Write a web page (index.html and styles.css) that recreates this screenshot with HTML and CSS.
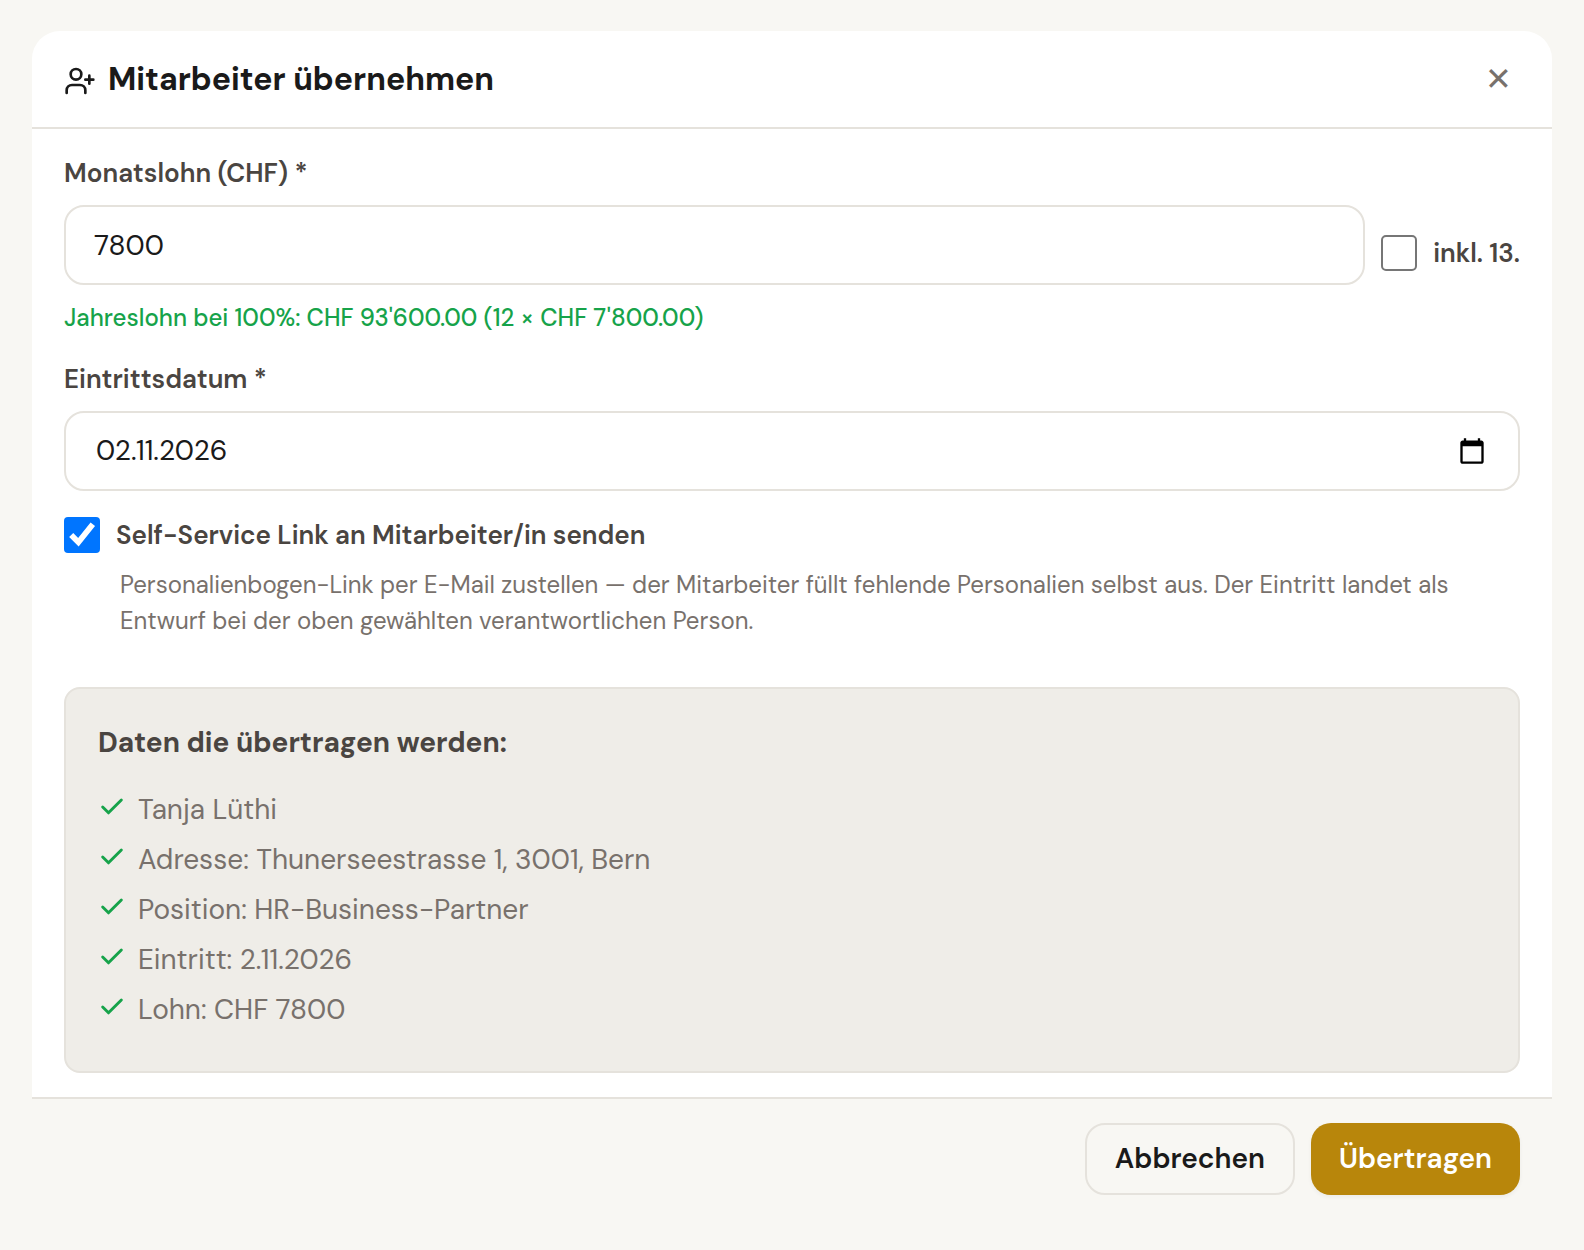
FILE: index.html
```
<!DOCTYPE html>
<html lang="de">
<head>
<meta charset="UTF-8">
<meta name="viewport" content="width=device-width, initial-scale=1.0">
<title>Mitarbeiter übernehmen</title>
<link rel="stylesheet" href="styles.css">
</head>
<body>
<form class="modal">
  <!-- Header -->
  <header class="modal-header">
    <h2 class="modal-title">
      <svg class="title-icon" viewBox="0 0 24 24" aria-hidden="true">
        <path d="M16 21v-2a4 4 0 0 0-4-4H6a4 4 0 0 0-4 4v2"/>
        <circle cx="9" cy="7" r="4"/>
        <path d="M19 8v6M22 11h-6"/>
      </svg>
      Mitarbeiter übernehmen
    </h2>
    <button type="button" class="close-btn" aria-label="Schliessen">✕</button>
  </header>

  <!-- Form fields -->
  <div class="modal-body">
    <div class="field">
      <label class="field-label" for="lohn">Monatslohn (CHF) *</label>
      <div class="input-row">
        <input type="text" class="input" id="lohn" name="lohn" inputmode="decimal" value="7800">
        <label class="check-label"><input type="checkbox" class="checkbox" name="inkl13"> inkl. 13.</label>
      </div>
      <p class="salary-hint">Jahreslohn bei 100%: CHF 93'600.00 (12 × CHF 7'800.00)</p>
    </div>

    <div class="field">
      <label class="field-label" for="eintritt">Eintrittsdatum *</label>
      <div class="input date-input">
        <input type="text" class="date-text" id="eintritt" name="eintritt" value="02.11.2026">
        <button type="button" class="calendar-btn" aria-label="Kalender öffnen">
          <svg viewBox="0 0 24 24" aria-hidden="true"><path d="M20 3h-1V1h-2v2H7V1H5v2H4c-1.100 0-2 .9-2 2v16c0 1.100.9 2 2 2h16c1.100 0 2-.9 2-2V5c0-1.100-.9-2-2-2zm0 18H4V8h16v13z"/></svg>
        </button>
      </div>
    </div>

    <div class="self-service">
      <label class="check-label"><input type="checkbox" class="checkbox" name="selfservice" checked> Self-Service Link an Mitarbeiter/in senden</label>
      <p class="help-text">Personalienbogen-Link per E-Mail zustellen — der Mitarbeiter füllt fehlende Personalien selbst aus. Der Eintritt landet als Entwurf bei der oben gewählten verantwortlichen Person.</p>
    </div>

    <!-- Summary -->
    <section class="summary">
      <h3 class="summary-title">Daten die übertragen werden:</h3>
      <ul class="summary-list">
        <li><svg class="check" viewBox="0 0 24 24" aria-hidden="true"><path d="M20 6 9 17l-5-5"/></svg>Tanja Lüthi</li>
        <li><svg class="check" viewBox="0 0 24 24" aria-hidden="true"><path d="M20 6 9 17l-5-5"/></svg>Adresse: Thunerseestrasse 1, 3001, Bern</li>
        <li><svg class="check" viewBox="0 0 24 24" aria-hidden="true"><path d="M20 6 9 17l-5-5"/></svg>Position: HR-Business-Partner</li>
        <li><svg class="check" viewBox="0 0 24 24" aria-hidden="true"><path d="M20 6 9 17l-5-5"/></svg>Eintritt: 2.11.2026</li>
        <li><svg class="check" viewBox="0 0 24 24" aria-hidden="true"><path d="M20 6 9 17l-5-5"/></svg>Lohn: CHF 7800</li>
      </ul>
    </section>
  </div>

  <!-- Actions -->
  <footer class="modal-footer">
    <button type="button" class="btn">Abbrechen</button>
    <button type="submit" class="btn btn-primary">Übertragen</button>
  </footer>
</form>
</body>
</html>
```
FILE: styles.css
```
* {
  box-sizing: border-box;
}
body {
  margin: 0;
  padding: 31px 32px;
  background-color: #f8f7f3;
  color: #1a1a1a;
  font-family: 'DM Sans', Inter, sans-serif;
  font-size: 28px;
  line-height: 42px;
}
h2, h3, p, ul {
  margin: 0;
}
input, button {
  font: inherit;
  color: inherit;
}
button {
  cursor: pointer;
}
.modal {
  border-radius: 28px 28px 0 0;
  overflow: hidden;
}
.modal-header {
  display: flex;
  align-items: center;
  justify-content: space-between;
  padding: 24px 32px;
  background-color: #fff;
  border-bottom: 2px solid #e5e2dc;
}
.modal-title {
  display: flex;
  align-items: center;
  gap: 12px;
  font-size: 32px;
  font-weight: 700;
  line-height: 48px;
}
.title-icon {
  width: 32px;
  height: 32px;
  margin-top: 4px;
  fill: none;
  stroke: currentColor;
  stroke-width: 2;
  stroke-linecap: round;
  stroke-linejoin: round;
}
.close-btn {
  padding: 0 8px;
  border: none;
  background: none;
  color: #78716c;
  font-size: 32px;
}
.modal-body {
  padding: 24px 32px;
  background-color: #fff;
}
.field {
  margin-bottom: 24px;
}
.field-label, .check-label {
  color: #4a4541;
  font-size: 26px;
  font-weight: 600;
  line-height: 40px;
}
.field-label {
  display: block;
  margin-bottom: 12px;
}
.check-label {
  display: flex;
  align-items: center;
  gap: 16px;
}
.input-row {
  display: flex;
  align-items: flex-end;
  gap: 16px;
}
.input-row .check-label {
  padding-bottom: 12px;
  white-space: nowrap;
}
.input {
  flex: 1;
  min-width: 0;
  height: 80px;
  padding: 0 28px;
  border: 2px solid #e5e2dc;
  border-radius: 20px;
  background-color: #fff;
}
.date-input {
  display: flex;
  align-items: center;
  padding-right: 32px;
}
.date-text {
  flex: 1;
  min-width: 0;
  padding: 0 2px;
  border: none;
  outline: none;
  background: none;
}
.calendar-btn {
  display: flex;
  padding: 0;
  border: none;
  background: none;
  color: #000;
}
.calendar-btn svg {
  width: 28px;
  height: 28px;
  fill: currentColor;
}
.checkbox {
  width: 18px;
  height: 18px;
  margin: 0;
  zoom: 2;
}
.salary-hint {
  margin-top: 16px;
  color: #16a34a;
  font-size: 24px;
  font-weight: 500;
  line-height: 34px;
}
.help-text {
  margin: 12px 0 48px;
  padding-left: 56px;
  color: #78716c;
  font-size: 24px;
  line-height: 36px;
}
.summary {
  padding: 32px;
  border: 2px solid #e5e2dc;
  border-radius: 16px;
  background-color: #efede8;
}
.summary-title {
  margin-bottom: 24px;
  color: #4a4541;
  font-size: 28px;
  font-weight: 700;
  line-height: 44px;
}
.summary-list {
  padding: 0;
  list-style: none;
  color: #78716c;
}
.summary-list li {
  display: flex;
  align-items: center;
  gap: 12px;
  margin-bottom: 8px;
}
.check {
  width: 28px;
  height: 28px;
  margin-bottom: 6px;
  fill: none;
  stroke: #16a34a;
  stroke-width: 2.5;
  stroke-linecap: round;
  stroke-linejoin: round;
}
.modal-footer {
  display: flex;
  justify-content: flex-end;
  gap: 16px;
  padding: 24px 32px;
  border-top: 2px solid #e5e2dc;
}
.btn {
  height: 72px;
  padding: 0 28px;
  border: 2px solid #e5e2dc;
  border-radius: 20px;
  background-color: transparent;
  font-weight: 600;
}
.btn-primary {
  border: none;
  background-color: #b8860b;
  box-shadow: 0 2px 4px rgba(0, 0, 0, 0.05);
  color: #fff;
}
```
